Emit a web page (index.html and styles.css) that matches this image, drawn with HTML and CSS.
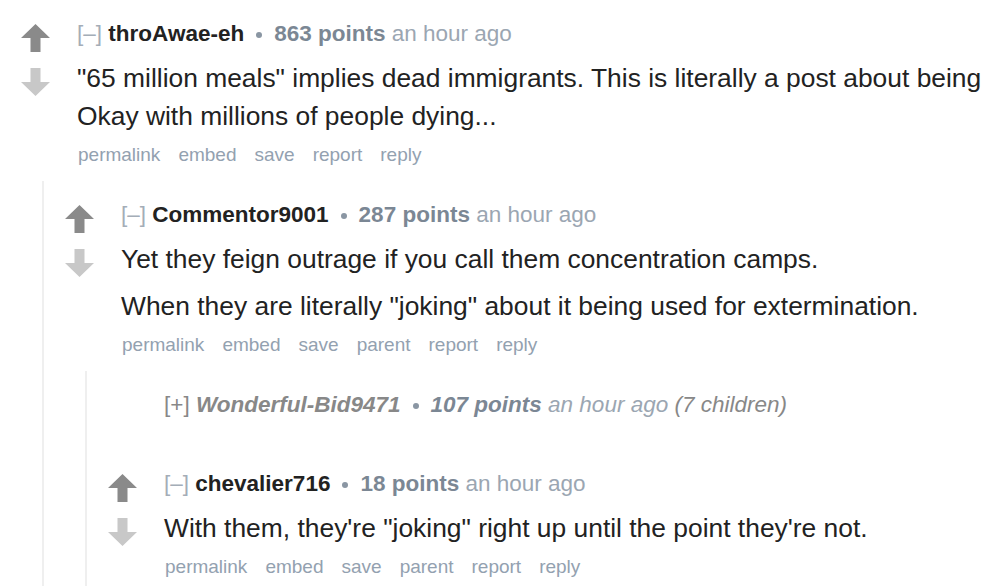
FILE: index.html
```html
<!DOCTYPE html>
<html>
<head>
<meta charset="utf-8">
<link rel="stylesheet" href="styles.css">
</head>
<body>
<div class="thread">
  <div class="comment">
    <div class="midcol">
      <svg class="arrow up" viewBox="0 0 29 28"><polygon points="0,14 14.5,0 29,14 19.5,14 19.5,28 9.5,28 9.5,14"/></svg>
      <svg class="arrow down" viewBox="0 0 29 28"><polygon points="0,14 14.5,28 29,14 19.5,14 19.5,0 9.5,0 9.5,14"/></svg>
    </div>
    <div class="entry">
      <p class="tagline"><span class="expand">[–]</span> <span class="author">throAwae-eh</span><span class="dot"></span><span class="score">863 points</span> <span class="time">an hour ago</span></p>
      <div class="md">
        <p>"65 million meals" implies dead immigrants. This is literally a post about being Okay with millions of people dying...</p>
      </div>
      <ul class="buttons"><li>permalink</li><li>embed</li><li>save</li><li>report</li><li>reply</li></ul>
    </div>
  </div>
  <div class="child">
    <div class="comment">
      <div class="midcol">
        <svg class="arrow up" viewBox="0 0 29 28"><polygon points="0,14 14.5,0 29,14 19.5,14 19.5,28 9.5,28 9.5,14"/></svg>
        <svg class="arrow down" viewBox="0 0 29 28"><polygon points="0,14 14.5,28 29,14 19.5,14 19.5,0 9.5,0 9.5,14"/></svg>
      </div>
      <div class="entry">
        <p class="tagline"><span class="expand">[–]</span> <span class="author">Commentor9001</span><span class="dot"></span><span class="score">287 points</span> <span class="time">an hour ago</span></p>
        <div class="md">
          <p>Yet they feign outrage if you call them concentration camps.</p>
          <p>When they are literally "joking" about it being used for extermination.</p>
        </div>
        <ul class="buttons"><li>permalink</li><li>embed</li><li>save</li><li>parent</li><li>report</li><li>reply</li></ul>
      </div>
    </div>
    <div class="child">
      <div class="comment collapsed">
        <div class="midcol"></div>
        <div class="entry">
          <p class="tagline"><span class="expand">[+]</span> <span class="author">Wonderful-Bid9471</span><span class="dot"></span><span class="score">107 points</span> <span class="time">an hour ago</span> <span class="children">(7 children)</span></p>
        </div>
      </div>
      <div class="comment">
        <div class="midcol">
          <svg class="arrow up" viewBox="0 0 29 28"><polygon points="0,14 14.5,0 29,14 19.5,14 19.5,28 9.5,28 9.5,14"/></svg>
          <svg class="arrow down" viewBox="0 0 29 28"><polygon points="0,14 14.5,28 29,14 19.5,14 19.5,0 9.5,0 9.5,14"/></svg>
        </div>
        <div class="entry">
          <p class="tagline"><span class="expand">[–]</span> <span class="author">chevalier716</span><span class="dot"></span><span class="score">18 points</span> <span class="time">an hour ago</span></p>
          <div class="md">
            <p>With them, they're "joking" right up until the point they're not.</p>
          </div>
          <ul class="buttons"><li>permalink</li><li>embed</li><li>save</li><li>parent</li><li>report</li><li>reply</li></ul>
        </div>
      </div>
    </div>
  </div>
</div>
</body>
</html>
```
FILE: styles.css
```css
html, body {
  margin: 0;
  padding: 0;
  background: #ffffff;
}
body {
  font-family: "Liberation Sans", Arial, sans-serif;
  color: #222222;
  overflow: hidden;
  height: 587px;
}
.thread {
  padding: 0 8px 0 0;
}
.comment {
  display: flex;
  padding-top: 19px;
}
.midcol {
  width: 29px;
  margin-left: 21px;
  margin-right: 27px;
  flex: none;
  display: flex;
  flex-direction: column;
  padding-top: 5px;
}
.arrow {
  width: 29px;
  height: 28px;
  display: block;
}
.arrow.up { fill: #8a8a8a; }
.arrow.down { fill: #c8c8c8; margin-top: 16px; }
.entry {
  flex: 1;
  min-width: 0;
}
.tagline {
  margin: 0;
  font-size: 22.5px;
  line-height: 30px;
  white-space: nowrap;
}
.expand { color: #a4adb7; }
.author { font-weight: bold; color: #222222; }
.dot {
  display: inline-block;
  width: 6px;
  height: 6px;
  border-radius: 50%;
  background: #8a96a3;
  margin: 0 12px;
  vertical-align: middle;
}
.score { font-weight: bold; color: #7b8794; }
.time { color: #9ba6b2; }
.md {
  margin-top: 10px;
}
.md p {
  margin: 0;
  font-size: 26.4px;
  line-height: 38px;
  color: #222222;
}
.md p + p { margin-top: 9px; }
.buttons {
  list-style: none;
  margin: 7px 0 0 0;
  padding: 0 0 0 1px;
  display: flex;
  gap: 18px;
  font-size: 19px;
  line-height: 26px;
  color: #93a1b0;
}
.child {
  margin-left: 42px;
  border-left: 2px solid #efefef;
  margin-top: 13px;
}
.child .child {
  margin-left: 41px;
  padding-bottom: 6px;
}
.collapsed {
  padding-top: 19px;
  padding-bottom: 30px;
}
.collapsed .tagline { font-style: italic; }
.collapsed .expand { color: #888888; font-style: normal; }
.collapsed .author { color: #888888; }
.collapsed .children { color: #888888; }
```
